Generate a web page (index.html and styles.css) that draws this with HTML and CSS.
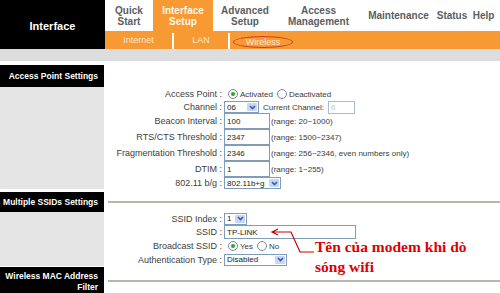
FILE: index.html
```html
<!DOCTYPE html>
<html lang="vi">
<head>
    <meta charset="UTF-8">
    <title>Interface - Wireless</title>
    <link rel="stylesheet" href="styles.css">
</head>
<body>
    <div class="top">
        <div class="brand">Interface</div>
        <div class="nav">
            <div class="menu">
                <div class="menu-item m-quick">Quick<br>Start</div>
                <div class="menu-item m-iface active">Interface<br>Setup</div>
                <div class="menu-item m-adv">Advanced<br>Setup</div>
                <div class="menu-item m-access">Access<br>Management</div>
                <div class="menu-item m-maint">Maintenance</div>
                <div class="menu-item m-status">Status</div>
                <div class="menu-item m-help">Help</div>
            </div>
            <div class="submenu">
                <div class="sub s-internet">Internet</div>
                <div class="sub-sep"></div>
                <div class="sub s-lan">LAN</div>
                <div class="sub-sep"></div>
                <div class="sub s-wireless"><span class="circled">Wireless</span></div>
            </div>
        </div>
    </div>
    <div class="band"></div>

    <!-- Access Point Settings -->
    <div class="sec-head first">
        <div class="sec-title">Access Point Settings</div>
    </div>
    <div class="sec-body">
        <div class="sec-side"></div>
        <div class="form">
            <div class="row h14">
                <div class="label">Access Point :</div>
                <span class="radio on"></span><span class="opt">Activated</span>
                <span class="radio"></span><span class="opt">Deactivated</span>
            </div>
            <div class="row h12">
                <div class="label">Channel :</div>
                <div class="select w35">06<span class="arrow"><svg width="7" height="5" viewBox="0 0 7 5"><path d="M1 1 L3.5 3.5 L6 1" fill="none" stroke="#3c5a9a" stroke-width="1.6"/></svg></span></div>
                <span class="hint cur">Current Channel:</span>
                <input class="field small" type="text" value="6" disabled>
            </div>
            <div class="row h16">
                <div class="label">Beacon Interval :</div>
                <input class="field" type="text" value="100">
                <span class="hint">(range: 20~1000)</span>
            </div>
            <div class="row h16">
                <div class="label">RTS/CTS Threshold :</div>
                <input class="field" type="text" value="2347">
                <span class="hint">(range: 1500~2347)</span>
            </div>
            <div class="row h16">
                <div class="label">Fragmentation Threshold :</div>
                <input class="field" type="text" value="2346">
                <span class="hint">(range: 256~2346, even numbers only)</span>
            </div>
            <div class="row h16">
                <div class="label">DTIM :</div>
                <input class="field" type="text" value="1">
                <span class="hint">(range: 1~255)</span>
            </div>
            <div class="row h12">
                <div class="label">802.11 b/g :</div>
                <div class="select w57">802.11b+g<span class="arrow"><svg width="7" height="5" viewBox="0 0 7 5"><path d="M1 1 L3.5 3.5 L6 1" fill="none" stroke="#3c5a9a" stroke-width="1.6"/></svg></span></div>
            </div>
        </div>
    </div>

    <!-- Multiple SSIDs Settings -->
    <div class="sec-head">
        <div class="sec-title">Multiple SSIDs Settings</div>
        <div class="sec-rule"></div>
    </div>
    <div class="sec-body">
        <div class="sec-side"></div>
        <div class="form">
            <div class="row h13">
                <div class="label">SSID Index :</div>
                <div class="select w23">1<span class="arrow"><svg width="7" height="5" viewBox="0 0 7 5"><path d="M1 1 L3.5 3.5 L6 1" fill="none" stroke="#3c5a9a" stroke-width="1.6"/></svg></span></div>
            </div>
            <div class="row h14">
                <div class="label">SSID :</div>
                <input class="field wide" type="text" value="TP-LINK">
            </div>
            <div class="row h14">
                <div class="label">Broadcast SSID :</div>
                <span class="radio on"></span><span class="opt">Yes</span>
                <span class="radio"></span><span class="opt">No</span>
            </div>
            <div class="row h13">
                <div class="label">Authentication Type :</div>
                <div class="select w63">Disabled<span class="arrow"><svg width="7" height="5" viewBox="0 0 7 5"><path d="M1 1 L3.5 3.5 L6 1" fill="none" stroke="#3c5a9a" stroke-width="1.6"/></svg></span></div>
            </div>
        </div>
    </div>

    <!-- Wireless MAC Address Filter -->
    <div class="sec-head last">
        <div class="sec-title two">Wireless MAC Address Filter</div>
        <div class="sec-rule"></div>
    </div>

    <!-- annotation drawn over the form -->
    <svg class="pointer" width="50" height="32" viewBox="268 224 50 32">
        <path d="M278 229 L272 232 L278 235 M272 232 L291 232 L300 252 L314 252" fill="none" stroke="#c80000" stroke-width="1.2"/>
    </svg>
    <div class="note">Tên của modem khi dò<br>sóng wifi</div>
</body>
</html>
```

FILE: styles.css
```css
body {
    margin: 0;
    font-family: "Liberation Sans", Arial, sans-serif;
    font-size: 8px;
    color: #333;
    background: #fff;
    width: 500px;
    height: 293px;
    overflow: hidden;
    position: relative;
}

/* header */
.top {
    display: flex;
    height: 49px;
}
.brand {
    width: 105px;
    background: #000;
    color: #fff;
    font-size: 11px;
    font-weight: bold;
    display: flex;
    align-items: center;
    justify-content: center;
    padding-top: 3px;
    box-sizing: border-box;
}
.nav {
    flex: 1;
    display: flex;
    flex-direction: column;
}
.menu {
    display: flex;
    height: 31px;
}
.menu-item {
    display: flex;
    align-items: center;
    justify-content: center;
    text-align: center;
    font-size: 10px;
    font-weight: bold;
    line-height: 11px;
    color: #5a5d62;
}
.menu-item.active {
    background: #f79a33;
    color: #fff8ec;
}
.m-quick { width: 48px; }
.m-iface { width: 60px; }
.m-adv { width: 64px; }
.m-access { width: 83px; }
.m-maint { width: 77px; }
.m-status { width: 30px; }
.m-help { width: 33px; }

.submenu {
    display: flex;
    align-items: center;
    height: 18px;
    background: #f79a33;
    color: #ffe6c6;
    font-size: 9px;
}
.sub {
    display: flex;
    justify-content: center;
    align-items: center;
}
.s-internet { width: 67px; }
.s-lan { width: 54px; }
.s-wireless { width: 66px; }
.sub-sep {
    width: 2px;
    height: 16px;
    margin-top: 2px;
    background: #fff;
}
.circled {
    display: inline-block;
    border: 1px solid #d2401c;
    border-radius: 50%;
    padding: 0 12px;
    height: 10px;
    line-height: 10px;
    margin-top: 4px;
}
.band {
    height: 12px;
    background: #dddddd;
}

/* sections */
.sec-head {
    display: flex;
    align-items: center;
    margin-top: 3px;
}
.sec-head.first { margin-top: 4px; }
.sec-head.last { margin-top: 1px; }
.sec-title {
    width: 104px;
    box-sizing: border-box;
    min-height: 20px;
    padding: 0 6px 0 1px;
    background: #000;
    color: #fff;
    font-size: 8.5px;
    font-weight: bold;
    display: flex;
    align-items: center;
    justify-content: flex-end;
    text-align: right;
}
.sec-head.first .sec-title { min-height: 22px; }
.sec-title.two {
    min-height: 28px;
    line-height: 11px;
    padding-top: 2px;
}
.sec-rule {
    flex: 1;
    height: 2px;
    margin-left: 4px;
    background: #b6b6ae;
}
.sec-body {
    display: flex;
}
.sec-side {
    width: 104px;
    background: #e5e5e5;
}
.form {
    flex: 1;
}
.row {
    display: flex;
    align-items: center;
}
.h12 { height: 12px; }
.h13 { height: 13px; }
.h14 { height: 14px; }
.h16 { height: 16px; }
.label {
    width: 120px;
    box-sizing: border-box;
    padding-right: 2px;
    text-align: right;
    font-size: 9px;
    color: #404040;
}

/* controls */
.radio {
    width: 8px;
    height: 8px;
    border: 1px solid #7d8c9c;
    border-radius: 50%;
    background: #fbfbfb;
    margin: 0 2px 0 4px;
    display: flex;
    align-items: center;
    justify-content: center;
}
.radio.on::after {
    content: "";
    width: 4px;
    height: 4px;
    border-radius: 50%;
    background: #2aa52a;
}
.opt {
    color: #3a3a3a;
}
.select {
    height: 12px;
    box-sizing: border-box;
    border: 1px solid #7f9db9;
    background: #fff;
    display: flex;
    align-items: center;
    padding-left: 2px;
    color: #222;
}
.select .arrow {
    margin-left: auto;
    margin-right: 1px;
    width: 10px;
    height: 8px;
    border-radius: 1px;
    background: #c6d6f7;
    display: flex;
    align-items: center;
    justify-content: center;
}
.w23 { width: 23px; }
.w35 { width: 35px; }
.w57 { width: 57px; }
.w63 { width: 63px; }
.field {
    width: 46px;
    height: 16px;
    box-sizing: border-box;
    border: 1px solid #7f9db9;
    margin: 0;
    padding: 0 2px;
    font-family: "Liberation Sans", Arial, sans-serif;
    font-size: 8px;
    color: #222;
    background: #fff;
    outline: none;
}
.field.small {
    width: 27px;
    height: 13px;
    border-color: #a9bdd2;
    color: #c4c4c4;
}
.field.wide {
    width: 132px;
    height: 14px;
}
.hint {
    margin-left: 1px;
    color: #3a3a3a;
}
.hint.cur {
    margin-left: 4px;
    margin-right: 4px;
}

/* annotation */
.pointer {
    position: absolute;
    left: 268px;
    top: 224px;
}
.note {
    position: absolute;
    left: 315px;
    top: 237px;
    font-family: "Liberation Serif", "Times New Roman", serif;
    font-size: 15.5px;
    font-weight: bold;
    line-height: 20px;
    color: #e00000;
    white-space: nowrap;
}
```
